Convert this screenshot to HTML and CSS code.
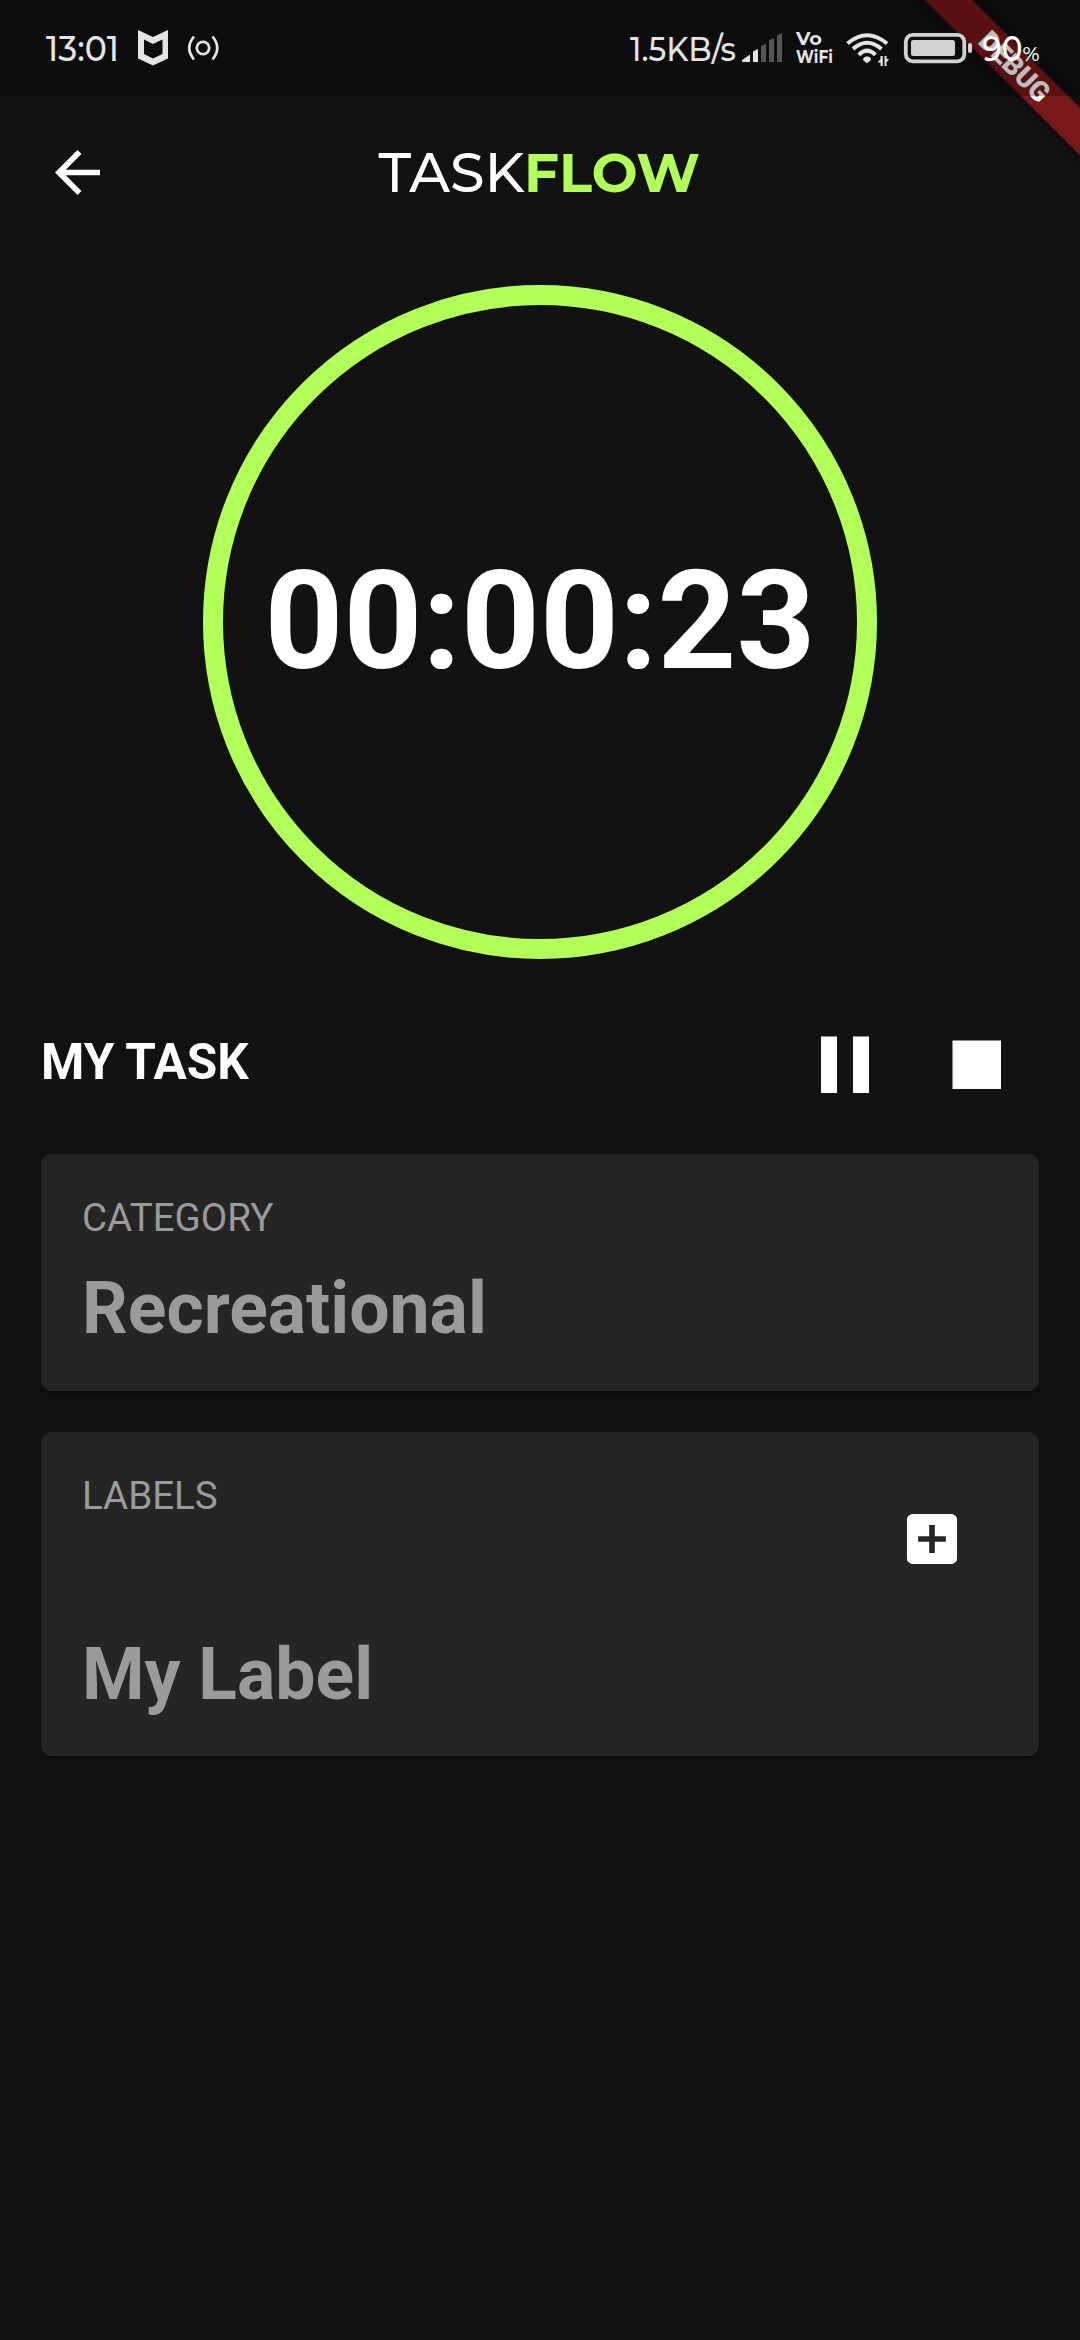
FILE: index.html
```html
<!DOCTYPE html>
<html lang="en">
<head>
<meta charset="utf-8">
<title>TaskFlow</title>
<link rel="stylesheet" href="styles.css">
</head>
<body>
<svg class="banner" width="240" height="200" viewBox="840 0 240 200">
  <g transform="translate(1014.500 66) rotate(45)">
    <rect class="banner-band" x="-150" y="-16.800" width="300" height="33.600"/>
    <text class="banner-text" x="-43" y="10" textLength="87" lengthAdjust="spacingAndGlyphs">DEBUG</text>
  </g>
</svg>
<header class="status">
  <div class="status-side">
    <svg class="time" width="72" height="96" viewBox="46 0 72 96"><text x="46" y="61" font-size="35.500" textLength="73" lengthAdjust="spacingAndGlyphs">13:01</text></svg>
    <svg class="shield" width="30" height="96" viewBox="138 0 30 96"><path fill-rule="evenodd" d="M138 30L153 37L168 30V58.500L153 65.500L138 58.500ZM144 39.500V54L153 58.500L162.500 54V39.500L153 44Z"/></svg>
    <svg class="cast" width="32" height="96" viewBox="187 0 32 96"><g class="line" stroke-width="2.700"><circle cx="203" cy="48" r="6.200"/><path d="M194 36.500Q184.500 48 194 59.500M212.500 36.500Q222 48 212.500 59.500"/></g></svg>
  </div>
  <div class="status-side">
    <svg width="106" height="96" viewBox="630 0 106 96"><text x="630" y="60.500" font-size="33" textLength="106" lengthAdjust="spacingAndGlyphs">1.5KB/s</text></svg>
    <svg class="signal" width="40" height="96" viewBox="742 0 40 96"><path d="M742 62V60L750 54.500V62ZM753 62V51.500L758 49V62Z"/><path class="dim" d="M761 62V46L766 43.500V62ZM769 62V40.500L774 38V62ZM777 62V35.500L782 33V62Z"/></svg>
    <svg class="vowifi" width="37" height="96" viewBox="796 0 37 96"><g font-size="17.500" font-weight="700"><text x="796" y="45.300" textLength="26" lengthAdjust="spacingAndGlyphs">Vo</text><text x="796" y="62.500" textLength="37" lengthAdjust="spacingAndGlyphs">WiFi</text></g></svg>
    <svg class="wifi" width="44" height="96" viewBox="846 0 44 96"><g class="line" stroke-width="4"><path d="M847.500 43.500Q867 27 887 43.500M853 49Q867 36.500 881.500 49M858.800 54.800Q867 46.500 875.500 54.800"/></g><path d="M863 60Q863 56.500 867 56.500T871 60L867 63.300Z"/><path d="M880.500 56H882.800V66H880.500V62.500H877.500L880.500 59ZM884.500 56H886.500V59H889L886.500 62.500V66H884.500Z"/></svg>
    <svg class="battery" width="69" height="96" viewBox="904 0 69 96"><rect class="line" x="905.800" y="34.800" width="58.500" height="26.500" rx="7" stroke-width="3.800"/><rect x="911" y="40" width="44" height="16" rx="2.500"/><rect x="968" y="43" width="4" height="10" rx="2"/></svg>
    <svg class="percent" width="56" height="96" viewBox="984 0 56 96"><text x="982.500" y="60.500" font-size="35.500" textLength="40" lengthAdjust="spacingAndGlyphs">90</text><text x="1022.500" y="60.500" font-size="21" textLength="17" lengthAdjust="spacingAndGlyphs">%</text></svg>
  </div>
</header>
<nav class="appbar">
  <svg class="back" width="45" height="45" viewBox="4 4 16 16"><path d="M20 11H7.830L13.420 5.410L12 4L4 12L12 20L13.410 18.590L7.830 13H20Z"/></svg>
  <svg class="logo" width="324" height="60" viewBox="378 142 324 60"><text class="thin" x="378.500" y="192" font-size="55" textLength="146" lengthAdjust="spacingAndGlyphs">TASK</text><text class="heavy" x="524" y="192" font-size="55" textLength="176" lengthAdjust="spacingAndGlyphs">FLOW</text></svg>
</nav>
<main>
  <div class="ring"><span>00:00:23</span></div>
  <section class="task">
    <h1>MY TASK</h1>
    <div class="controls">
      <svg width="48" height="57" viewBox="0 0 48 57"><path d="M0 .5H16V57H0ZM32 .5H48V57H32Z"/></svg>
      <svg width="49" height="49" viewBox="0 0 49 49"><path d="M.5.5H49V49H.5Z"/></svg>
    </div>
  </section>
  <section class="card category">
    <h2>CATEGORY</h2>
    <p>Recreational</p>
  </section>
  <section class="card labels">
    <div class="card-head">
      <h2>LABELS</h2>
      <svg class="add" width="50" height="50" viewBox="3 3 18 18"><path d="M19 3H5a2 2 0 0 0-2 2v14a2 2 0 0 0 2 2h14a2 2 0 0 0 2-2V5a2 2 0 0 0-2-2ZM17 13h-4v4h-2v-4H7v-2h4V7h2v4h4Z"/></svg>
    </div>
    <p>My Label</p>
  </section>
</main>
</body>
</html>
```
FILE: styles.css
```css
* { box-sizing: border-box; }
body {
  margin: 0;
  width: 1080px;
  height: 2340px;
  overflow: hidden;
  position: relative;
  background: #121212;
  color: #fff;
  font-family: Roboto, sans-serif;
}
svg { display: block; fill: currentColor; flex: none; overflow: visible; }
h1, h2, p { margin: 0; white-space: nowrap; }

/* Corner ribbon, drawn over the page and under the status scrim */
.banner { position: absolute; top: 0; right: 0; overflow: hidden; }
.banner-band { fill: #781818; filter: drop-shadow(0 0 8px rgba(0, 0, 0, .5)); }
.banner-text { font: 900 28px Roboto, sans-serif; fill: #fff; }

.status {
  position: relative;
  height: 96px;
  padding: 0 40px 0 46px;
  display: flex;
  justify-content: space-between;
  background: rgba(0, 0, 0, .26);
  color: #e4e4e4;
  font-family: "Montserrat", Lato, sans-serif;
  font-weight: 500;
}
.status-side { display: flex; }
.line { fill: none; stroke: currentColor; }
.dim { fill: #555; }
.shield { margin-left: 20px; }
.cast { margin-left: 19px; }
.signal { margin-left: 6px; }
.vowifi { margin-left: 14px; }
.wifi { margin-left: 13px; }
.battery { margin-left: 14px; color: #d2d2d2; }
.percent { margin-left: 11px; color: #fff; }

.appbar {
  height: 154px;
  padding: 46px 0 0 55px;
  display: flex;
  align-items: flex-start;
}
.back { margin-top: 8px; }
.logo { margin-left: 278px; font-family: "Montserrat", Inter, sans-serif; }
.thin { font-weight: 500; }
.heavy { font-weight: 700; fill: #b2ff59; }

main { padding: 35px 41px 0; }
.ring {
  width: 674px;
  height: 674px;
  margin: 0 auto;
  border: 20px solid #b2ff59;
  border-radius: 50%;
  display: flex;
  align-items: center;
  justify-content: center;
  font-size: 137.5px;
  font-weight: 700;
  line-height: 1;
}
.task {
  height: 195px;
  padding: 0 38px 0 0;
  display: flex;
  justify-content: space-between;
}
h1 { padding-top: 73px; font-size: 49.5px; line-height: 60px; font-weight: 700; }
.controls { display: flex; align-items: center; gap: 83px; height: 57px; margin-top: 77px; }
.card {
  padding: 41px;
  background: #252525;
  border-radius: 11px;
  box-shadow: 0 3px 5px rgba(0, 0, 0, .35);
  color: #9b9b9b;
}
.category { height: 237px; }
.labels { height: 324px; margin-top: 41px; }
h2 { font-size: 38.5px; line-height: 46px; font-weight: 400; }
.card p { font-size: 71.5px; line-height: 84px; font-weight: 700; }
.category p { margin-top: 26px; }
.card-head { display: flex; justify-content: space-between; height: 160px; }
.add { margin: 41px 41px 0 0; color: #fff; }
```
